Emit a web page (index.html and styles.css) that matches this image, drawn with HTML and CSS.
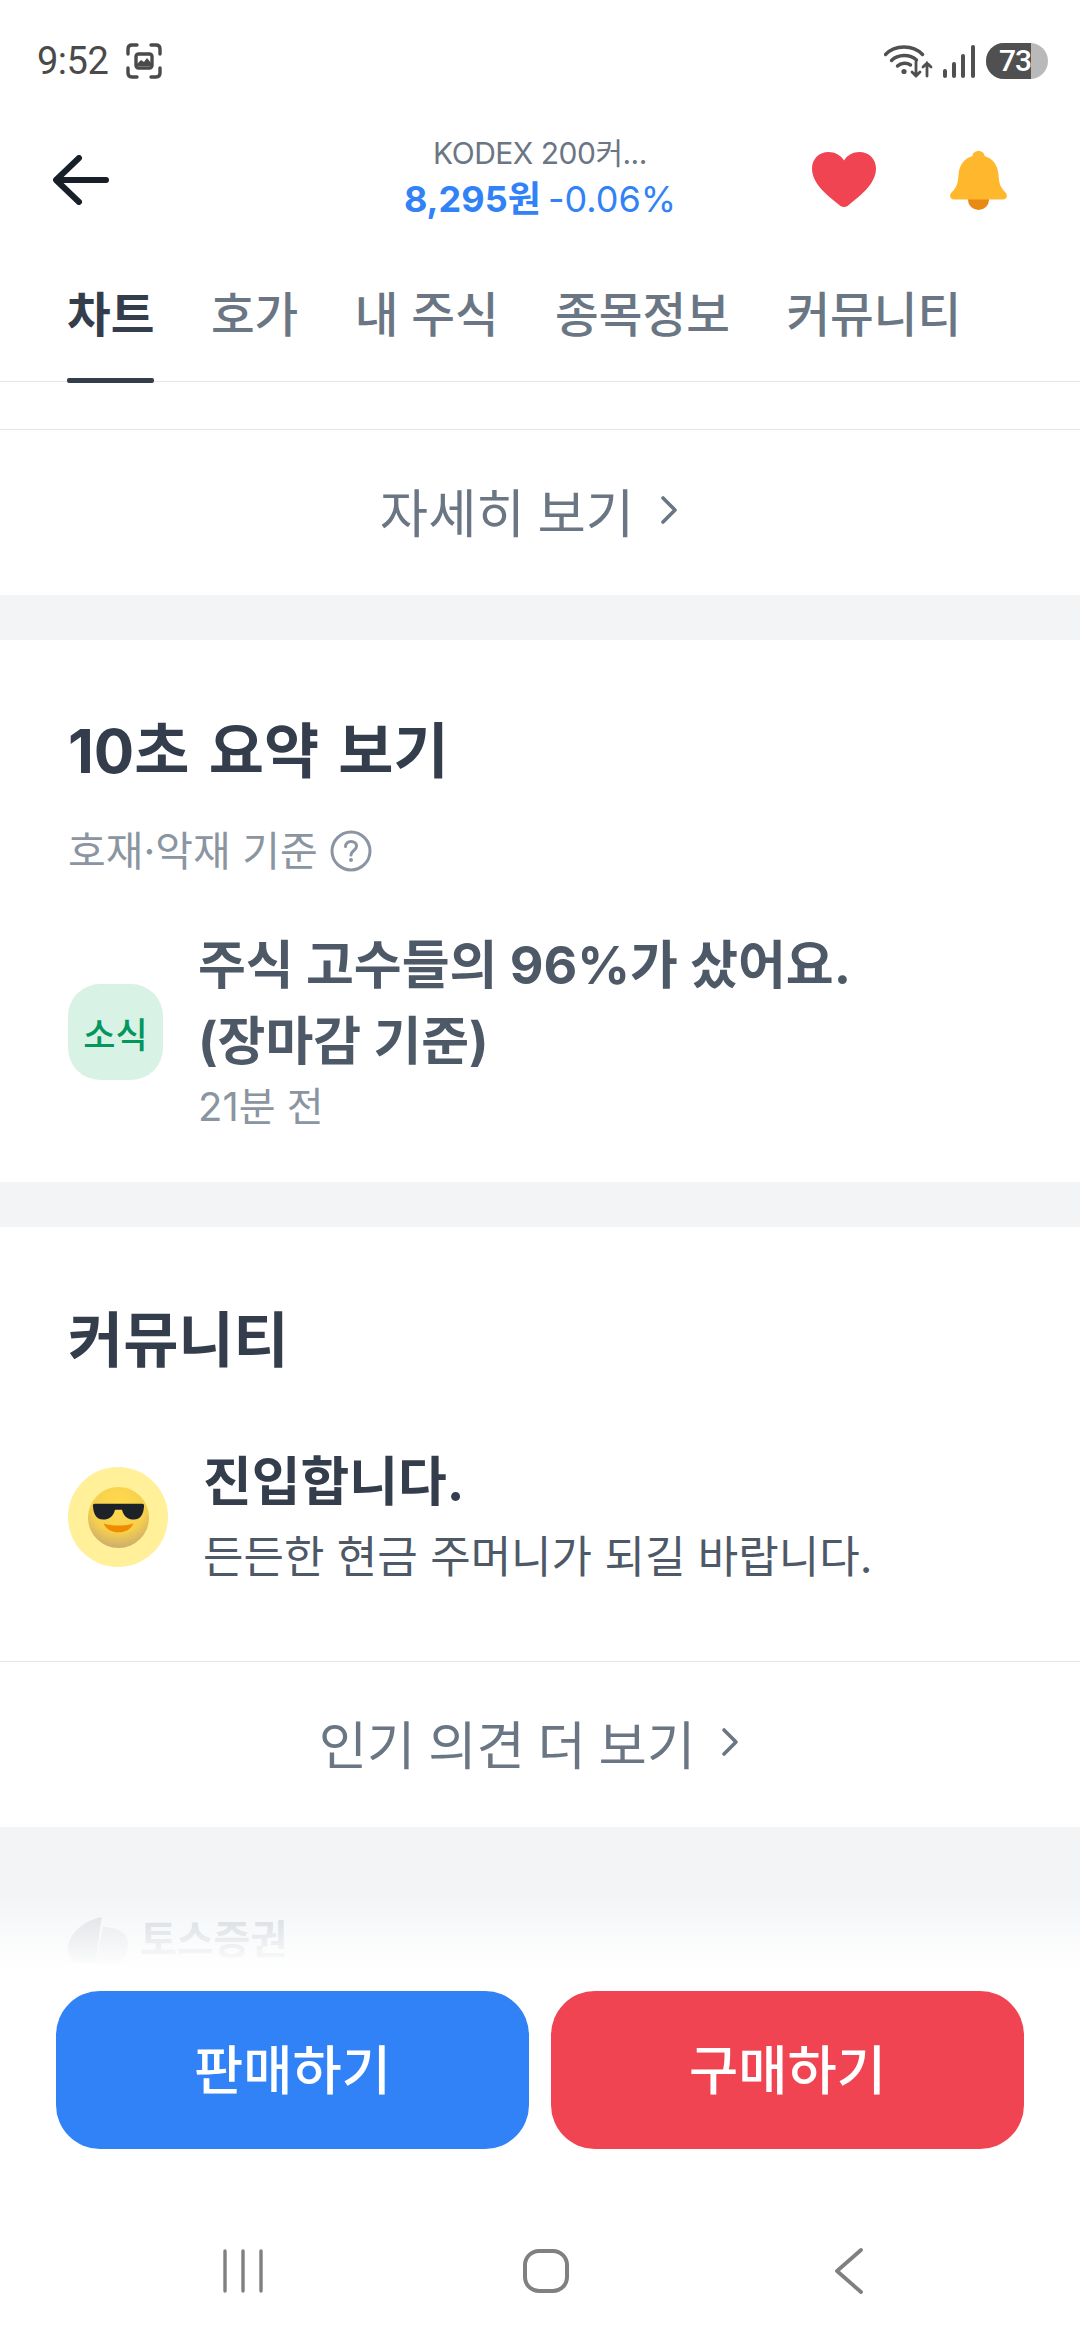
FILE: index.html
```html
<!DOCTYPE html>
<html lang="ko">
<head>
<meta charset="utf-8">
<title>KODEX 200</title>
<link rel="stylesheet" href="styles.css">
</head>
<body>
<div class="page">
  <div class="status">
    <div class="status-left">
      <span class="time">9:52</span>
      <svg class="shot" viewBox="0 0 36 36" fill="none" stroke="#4a4a4a" stroke-width="3.4" stroke-linecap="round" stroke-linejoin="round">
        <path d="M2 11V6q0-4 4-4h5M25 2h5q4 0 4 4v5M34 25v5q0 4-4 4h-5M11 34H6q-4 0-4-4v-5"/>
        <rect x="10" y="11" width="16" height="14" rx="2.5"/>
        <path d="M11 21l4-4 3 2 3-4 4 5v3H11z" fill="#4a4a4a" stroke="none"/>
      </svg>
    </div>
    <div class="status-right">
      <svg class="wifi" viewBox="0 0 49 33" fill="none" stroke="#505050" stroke-width="3.4" stroke-linecap="round">
        <path d="M1.5 9.5C11 -0.5 29 -0.5 38.500 9.500"/>
        <path d="M7.500 15.500C14 9 26 9 32.500 15"/>
        <path d="M13.500 21C17 17.500 23 17.500 26.500 20"/>
        <circle cx="20" cy="26.500" r="2.600" fill="#505050" stroke="none"/>
        <path d="M32 17V31M28 27l4 4 4-4M43 31V18M39 22l4-4 4 4" stroke-width="2.800"/>
      </svg>
      <svg class="signal" viewBox="0 0 32 33" fill="#505050">
        <rect x="0" y="24" width="4" height="9" rx="2"/>
        <rect x="9" y="17" width="4" height="16" rx="2"/>
        <rect x="18" y="9" width="4" height="24" rx="2"/>
        <rect x="28" y="0" width="4" height="33" rx="2"/>
      </svg>
      <div class="battery"><span class="battery-fill">73</span></div>
    </div>
  </div>

  <header class="topbar">
    <svg class="back" viewBox="0 0 56 50" fill="none" stroke="#191f28" stroke-width="6" stroke-linecap="round" stroke-linejoin="round">
      <path d="M26 3L3 25l23 22M4 25h49"/>
    </svg>
    <div class="stock">
      <div class="stock-name">KODEX 200커...</div>
      <div class="stock-price"><b>8,295원</b> -0.06%</div>
    </div>
    <div class="top-actions">
      <svg class="heart" viewBox="0 0 64 56"><path fill="#f04452" d="M32 55c-2 0-3.500-1-5-2.300C14 42.500 0 31 0 16.500 0 6.500 7.500 0 16.500 0 23 0 28.500 3 32 8.500 35.500 3 41 0 47.500 0 56.500 0 64 6.500 64 16.500 64 31 50 42.500 37 52.700 35.500 54 34 55 32 55z"/></svg>
      <svg class="bell" viewBox="0 0 57 59">
        <path fill="#e98a15" d="M18 47h21v2a10.500 10 0 0 1-21 0z"/>
        <path fill="#ffb82e" d="M28.500 0c3.500 0 6 2.200 6 5 9 2.500 13.500 10 14 19 .5 8 1.500 12 7 17.500 2.500 2.500 1.500 7-2.500 7H4c-4 0-5-4.500-2.500-7C7 36 8 32 8.500 24c.5-9 5-16.500 14-19 0-2.800 2.500-5 6-5z"/>
      </svg>
    </div>
  </header>

  <nav class="tabs">
    <span class="tab tab-on">차트</span>
    <span class="tab">호가</span>
    <span class="tab">내 주식</span>
    <span class="tab">종목정보</span>
    <span class="tab">커뮤니티</span>
  </nav>

  <div class="gap-top"></div>

  <div class="more">자세히 보기
    <svg class="chev" viewBox="0 0 18 30" fill="none" stroke="#6b7684" stroke-width="3.600" stroke-linecap="round" stroke-linejoin="round"><path d="M3 3l12 12L3 27"/></svg>
  </div>

  <div class="band"></div>

  <section class="summary">
    <h2 class="title">10초 요약 보기</h2>
    <div class="criteria">호재·악재 기준
      <svg class="help" viewBox="0 0 42 42" fill="none" stroke="#8b95a1" stroke-width="3">
        <circle cx="21" cy="21" r="19"/>
        <path d="M15.500 16.500c0-3.200 2.500-5 5.500-5s5.500 1.800 5.500 4.800c0 4.200-5.500 4.200-5.500 8.700" stroke-linecap="round"/>
        <circle cx="21" cy="30" r="2" fill="#8b95a1" stroke="none"/>
      </svg>
    </div>
    <div class="news">
      <div class="badge">소식</div>
      <div class="news-body">
        <div class="news-head">주식 고수들의 96%가 샀어요.<br>(장마감 기준)</div>
        <div class="news-time">21분 전</div>
      </div>
    </div>
  </section>

  <div class="band"></div>

  <section class="community">
    <h2 class="title">커뮤니티</h2>
    <div class="post">
      <div class="avatar">
        <svg class="emoji" viewBox="0 0 64 64">
          <defs>
            <radialGradient id="face" cx="50%" cy="30%" r="75%">
              <stop offset="0" stop-color="#ffdb4d"/>
              <stop offset="0.6" stop-color="#f6cf4e"/>
              <stop offset="1" stop-color="#c4a673"/>
            </radialGradient>
          </defs>
          <circle cx="32" cy="32" r="31" fill="url(#face)"/>
          <path fill="#1c2228" d="M8 18h48c1.500 0 2 1 2 2-.5 8-3 14-10.500 14-6 0-10-3-12-10h-7c-2 7-6 10-12 10C9 34 6.500 28 6 20c0-1 .5-2 2-2z"/>
          <path fill="#f08a00" d="M17 38c9 3 21 3 30 0-2 6-8 9-15 9s-13-3-15-9z"/>
        </svg>
      </div>
      <div class="post-body">
        <div class="post-head">진입합니다.</div>
        <div class="post-text">든든한 현금 주머니가 되길 바랍니다.</div>
      </div>
    </div>
  </section>

  <div class="more more-line">인기 의견 더 보기
    <svg class="chev" viewBox="0 0 18 30" fill="none" stroke="#6b7684" stroke-width="3.600" stroke-linecap="round" stroke-linejoin="round"><path d="M3 3l12 12L3 27"/></svg>
  </div>

  <footer class="foot">
    <svg class="foot-logo" viewBox="0 0 60 46">
      <path fill="#d5d9de" d="M34 0C14 4 0 18 0 32c0 7 3 12 8 14h20C30 30 31 14 34 0z"/>
      <path fill="#dfe2e6" d="M35 10c14 0 25 6 25 17 0 9-4 15-10 19H29c1-12 3-24 6-36z"/>
    </svg>
    <span class="foot-name">토스증권</span>
  </footer>

  <div class="dock">
    <div class="fade"></div>
    <div class="dock-body">
      <div class="actions">
        <button class="btn btn-sell">판매하기</button>
        <button class="btn btn-buy">구매하기</button>
      </div>
      <div class="sysnav">
        <svg class="nav-recent" viewBox="0 0 40 44" fill="none" stroke="#808080" stroke-width="3.400" stroke-linecap="round"><path d="M2 2v40M20 2v40M38 2v40"/></svg>
        <svg class="nav-home" viewBox="0 0 46 44" fill="none" stroke="#808080" stroke-width="4"><rect x="2" y="2" width="42" height="40" rx="14"/></svg>
        <svg class="nav-back" viewBox="0 0 28 46" fill="none" stroke="#808080" stroke-width="3.800" stroke-linecap="round" stroke-linejoin="round"><path d="M26 2L2 23l24 21"/></svg>
      </div>
    </div>
  </div>
</div>
</body>
</html>
```

FILE: styles.css
```css
* { box-sizing: border-box; margin: 0; padding: 0; }
html, body { background: #fff; }
body { width: 1080px; height: 2340px; overflow: hidden; font-family: Inter, "Noto Sans CJK KR", sans-serif; color: #333d4b; }
.page { position: relative; width: 1080px; height: 2340px; overflow: hidden; display: flex; flex-direction: column; background: #fff; }

.status { height: 90px; padding: 43px 32px 0 37px; display: flex; justify-content: space-between; align-items: flex-start; flex: none; }
.status-left { display: flex; align-items: center; gap: 18px; height: 36px; }
.time { font-family: Roboto, sans-serif; font-size: 38px; line-height: 36px; color: #4a4a4a; letter-spacing: -0.5px; }
.shot { width: 36px; height: 36px; }
.status-right { display: flex; align-items: center; height: 36px; }
.wifi { width: 49px; height: 33px; margin-right: 10px; }
.signal { width: 32px; height: 33px; margin-right: 11px; }
.battery { width: 62px; height: 36px; border-radius: 18px; background: #b9b9b9; overflow: hidden; }
.battery-fill { display: block; width: 45px; height: 36px; background: #505050; color: #fff; font-family: Roboto, sans-serif; font-size: 30px; line-height: 36px; text-align: right; white-space: nowrap; font-weight: 500; letter-spacing: -1px; }

.topbar { height: 180px; display: grid; grid-template-columns: 1fr auto 1fr; align-items: center; flex: none; }
.back { width: 56px; height: 50px; margin-left: 53px; }
.stock { text-align: center; padding-bottom: 5px; }
.stock-name { font-size: 30px; line-height: 40px; color: #6b7684; letter-spacing: -0.5px; }
.stock-price { font-size: 36px; line-height: 46px; color: #3182f6; margin-top: 3px; word-spacing: -3px; }
.stock-price b { font-weight: 700; }
.top-actions { display: flex; justify-content: flex-end; align-items: center; gap: 74px; padding-right: 73px; }
.heart { width: 64px; height: 56px; }
.bell { width: 57px; height: 59px; }

.tabs { height: 112px; padding: 0 0 0 67px; display: flex; gap: 56.500px; border-bottom: 1px solid #e5e8eb; flex: none; }
.tab { position: relative; font-size: 47.500px; line-height: 90px; font-weight: 500; color: #6b7684; white-space: nowrap; }
.tab-on { color: #333d4b; font-weight: 700; }
.tab-on::after { content: ""; position: absolute; left: 0; right: 0; bottom: -2px; height: 5px; background: #333d4b; border-radius: 2px; }

.gap-top { height: 48px; border-bottom: 1px solid #e5e8eb; flex: none; }

.more { height: 165px; padding-bottom: 5px; display: flex; align-items: center; justify-content: center; gap: 26px; font-size: 52.500px; word-spacing: -2px; color: #6b7684; white-space: nowrap; flex: none; }
.more-line { height: 166px; border-top: 1px solid #e5e8eb; }
.chev { width: 18px; height: 30px; margin-right: 22px; }

.band { height: 45px; background: #f2f4f6; flex: none; }

.summary { padding: 76px 68px 48px; flex: none; }
.title { font-size: 60px; line-height: 70px; font-weight: 700; color: #333d4b; word-spacing: 5px; }
.criteria { margin-top: 40px; height: 50px; display: flex; align-items: center; gap: 12px; font-size: 41px; line-height: 50px; color: #8b95a1; }
.help { width: 42px; height: 42px; }
.news { margin-top: 52px; display: flex; align-items: center; gap: 35px; }
.badge { width: 95px; height: 96px; margin-top: 2px; border-radius: 32px; background: #d9f2e6; color: #03965e; font-size: 35px; font-weight: 500; display: flex; align-items: center; justify-content: center; flex: none; }
.news-head { font-size: 52px; line-height: 76px; font-weight: 700; color: #4e5968; white-space: nowrap; }
.news-time { font-size: 40px; line-height: 54px; color: #8b95a1; }

.community { padding: 78px 68px 66px; flex: none; }
.post { margin-top: 70px; display: flex; align-items: center; gap: 35px; }
.avatar { width: 100px; height: 100px; border-radius: 50%; background: #fff099; display: flex; align-items: center; justify-content: center; flex: none; margin-top: -6px; }
.emoji { width: 63px; height: 63px; }
.post-head { font-size: 53px; line-height: 75px; font-weight: 700; color: #333d4b; white-space: nowrap; }
.post-text { font-size: 44px; line-height: 75px; color: #4e5968; white-space: nowrap; }

.foot { flex: 1; background: #f2f4f6; padding: 90px 0 0 68px; display: flex; align-items: flex-start; gap: 12px; }
.foot-logo { width: 60px; height: 46px; }
.foot-name { font-size: 40px; line-height: 46px; font-weight: 700; color: #c9ced4; }

.dock { position: absolute; left: 0; right: 0; bottom: 0; display: flex; flex-direction: column; }
.fade { height: 80px; background: linear-gradient(to bottom, rgba(255,255,255,0), #fff); }
.dock-body { background: #fff; height: 370px; }
.actions { padding: 21px 56px 0; display: grid; grid-template-columns: 1fr 1fr; gap: 22px; }
.btn { height: 158px; border: 0; border-radius: 44px; padding-bottom: 8px; color: #fff; font-family: inherit; font-size: 53.500px; font-weight: 500; }
.btn-sell { background: #3182f6; }
.btn-buy { background: #f04452; }
.sysnav { padding: 99px 79px 0 91px; display: grid; grid-template-columns: repeat(3, 1fr); justify-items: center; align-items: center; }
.nav-recent { width: 40px; height: 44px; }
.nav-home { width: 46px; height: 44px; }
.nav-back { width: 28px; height: 46px; }
```
